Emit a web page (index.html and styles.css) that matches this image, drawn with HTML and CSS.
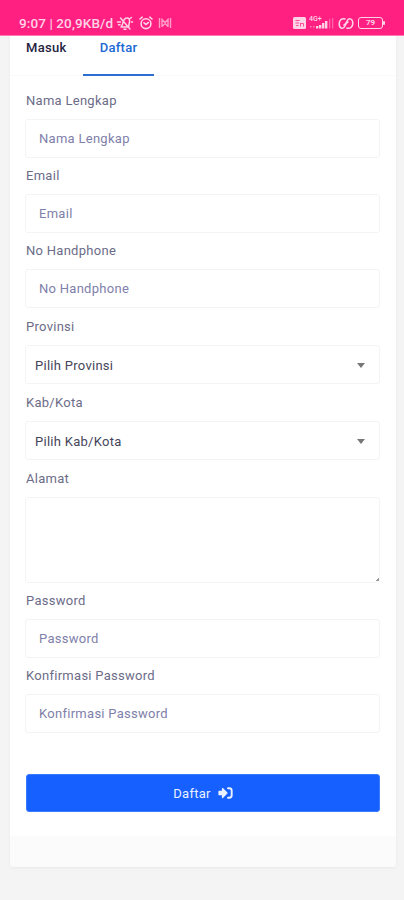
FILE: index.html
```
<!DOCTYPE html>
<html lang="id">
<head>
<meta charset="utf-8">
<meta name="viewport" content="width=device-width, initial-scale=1">
<title>Daftar</title>
<link rel="stylesheet" href="styles.css">
</head>
<body>
<header class="status">
  <span class="clock">9:07 | 20,9KB/d</span>
  <svg class="mute" width="18" height="16" viewBox="0 0 18 16" fill="none" stroke="currentColor" stroke-width="1.5" stroke-linecap="round" stroke-linejoin="round"><path d="M5 12c1.200-1 1.500-2.500 2-4.500C7.800 4.500 9 3 11 3s3 1.500 2.500 4l-1 5H5M8 14.300h2M4.500 3l9.500 11M1.500 7h3M2.500 9.800h1.500M14 3.500l1.500-1M15.500 7h1"/></svg>
  <svg class="alarm" width="14" height="14" viewBox="0 0 14 14" fill="none" stroke="currentColor" stroke-width="1.600" stroke-linecap="round"><circle cx="7" cy="7.7" r="4.900"/><path d="M1 3l2.200-1.800M13 3l-2.200-1.800M5 6.800l2 1.600 2.300-1.800"/></svg>
  <svg class="cast" width="14" height="12" viewBox="0 0 14 12" fill="none" stroke="currentColor" stroke-width="1.400"><path d="M1.500 1v10M12.500 1v10M4 10V2.500l3 3 3-3V10M4 9.500l3-3 3 3"/></svg>
  <span class="spacer"></span>
  <svg class="volte" width="13" height="12" viewBox="0 0 13 12"><rect width="13" height="12" rx="1.500" fill="currentColor"/><path d="M2.500 3.500h4M2.500 6h3.500M7 6.500h3.500v3M7.500 6.500v3M3 8.500h2.500" fill="none" stroke="#ff4c9a"/></svg>
  <span class="signal"><span class="net">4G+</span>
    <svg width="25" height="12" viewBox="0 0 25 12" fill="currentColor"><path d="M7 9h2.400v2.500H7zM10 8h2.400v3.500H10zM13 6h2.400v5.500H13zM16 4h2.400v7.500H16z"/><path d="M20 2h1.300v9.500H20zM23 1h1.300v10.500H23z" opacity=".4"/><path d="M1 9h1.500v1.500H1zM4 9h1.500v1.500H4z" opacity=".55"/></svg>
  </span>
  <svg class="link" width="16" height="13" viewBox="0 0 16 13" fill="none" stroke="currentColor" stroke-width="1.600" stroke-linecap="round"><path d="M7 1.900C3.500 1 1.200 3.500 1.200 6.700c0 2.600 1.400 4.500 3.300 4.500C7.600 11.200 6.500 6 10 5"/><path d="M9 11.100c3.500.9 5.800-1.600 5.800-4.800 0-2.600-1.400-4.500-3.300-4.500C8.400 1.800 9.500 7 6 8"/></svg>
  <span class="battery">79</span>
</header>
<main class="card">
  <nav class="tabs"><a class="tab">Masuk</a><a class="tab active">Daftar</a></nav>
  <form class="form">
    <label class="label" for="nama">Nama Lengkap</label>
    <input class="control" id="nama" placeholder="Nama Lengkap">
    <label class="label" for="email">Email</label>
    <input class="control" id="email" placeholder="Email">
    <label class="label" for="hp">No Handphone</label>
    <input class="control tall-gap" id="hp" placeholder="No Handphone">
    <label class="label" for="prov">Provinsi</label>
    <div class="control select tall-gap" id="prov"><span>Pilih Provinsi</span><i class="caret"></i></div>
    <label class="label" for="kota">Kab/Kota</label>
    <div class="control select tall-gap" id="kota"><span>Pilih Kab/Kota</span><i class="caret"></i></div>
    <label class="label" for="alamat">Alamat</label>
    <div class="area-wrap"><textarea class="control area" id="alamat"></textarea><i class="grip"></i></div>
    <label class="label" for="pass">Password</label>
    <input class="control" id="pass" placeholder="Password">
    <label class="label" for="konf">Konfirmasi Password</label>
    <input class="control" id="konf" placeholder="Konfirmasi Password">
    <button class="submit" type="button"><span>Daftar</span>
      <svg width="15" height="12" viewBox="0 0 15 12"><path d="M1 4.300h3.500V1.500L9 6l-4.500 4.500V7.700H1z" fill="currentColor" stroke="currentColor" stroke-width="1.200" stroke-linejoin="round"/><path d="M10 1.300h1.300c1.500 0 2.400.9 2.400 2.400v4.600c0 1.500-.9 2.400-2.400 2.400H10" fill="none" stroke="currentColor" stroke-width="1.900" stroke-linecap="round"/></svg>
    </button>
  </form>
  <footer class="foot"></footer>
</main>
</body>
</html>
```
FILE: styles.css
```
* { box-sizing: border-box; }
body {
  margin: 0;
  height: 900px;
  overflow: hidden;
  background: #f4f4f4;
  font-family: Roboto, sans-serif;
  font-size: 13px;
  letter-spacing: .28px;
  color: #6c6c88;
}
.status {
  display: flex;
  align-items: center;
  height: 36px;
  padding: 11px 20px 0 19px;
  background: #ff2082;
  border-bottom: 1px solid #ff79b3;
  color: #ffd3e6;
  letter-spacing: 0;
}
.clock { width: 96px; font-size: 13.5px; letter-spacing: .1px; font-weight: 500; white-space: nowrap; }
.mute { margin-left: 1px; }
.alarm { margin-left: 5px; }
.cast { margin-left: 5px; opacity: .7; }
.spacer { flex: 1; }
.signal { position: relative; display: flex; margin-left: 3px; }
.net { position: absolute; left: 0; top: -2px; font-size: 7px; line-height: 8px; font-weight: 500; }
.link { margin-left: 4px; }
.battery {
  position: relative;
  width: 25px;
  height: 12px;
  margin: 0 1px 0 4px;
  border: 1.5px solid currentColor;
  border-radius: 3px;
  font-size: 8px;
  line-height: 10px;
  font-weight: 700;
  text-align: center;
}
.battery::after {
  content: "";
  position: absolute;
  right: -3px;
  top: 3px;
  width: 2px;
  height: 4px;
  background: currentColor;
  border-radius: 1px;
}
.card {
  width: 386px;
  height: 831px;
  margin-left: 10px;
  display: flex;
  flex-direction: column;
  background: #fff;
  border-radius: 0 0 4px 4px;
  box-shadow: 0 1px 3px rgba(0, 0, 0, .05);
}
.tabs {
  display: flex;
  height: 40px;
  flex: none;
  border-bottom: 1px solid #f9f9fa;
}
.tab {
  width: 73px;
  height: 40px;
  padding: 3px 0 0 16px;
  line-height: 18px;
  font-weight: 500;
  color: #25233f;
}
.tab.active {
  width: 71px;
  text-align: center;
  padding: 3px 0 0;
  color: #2068d4;
  border-bottom: 2px solid #2c6fd1;
}
.form {
  display: flex;
  flex-direction: column;
  padding: 15px 16px 0 15px;
  flex: 1;
}
.label { height: 20px; line-height: 20px; margin: 0 0 8px 1px; }
.control {
  display: block;
  height: 39px;
  flex: none;
  width: 355px;
  margin: 0 0 8px;
  padding: 0 13px;
  border: 1px solid #f4f4f6;
  border-radius: 3px;
  background: #fff;
  font: inherit;
  letter-spacing: inherit;
  color: #45455a;
}
.control::placeholder { color: #8080aa; opacity: 1; }
.control.tall-gap { margin-bottom: 9px; }
.control.select {
  display: flex;
  align-items: center;
  justify-content: space-between;
  padding: 1px 14px 0 9px;
}
.caret {
  border: 4px solid transparent;
  border-top: 5px solid #777;
  border-bottom: 0;
}
.area-wrap { position: relative; }
.control.area { height: 86px; resize: none; }
.grip {
  position: absolute;
  right: 1px;
  top: 81px;
  width: 3px;
  height: 3px;
  background: linear-gradient(135deg, transparent 40%, #999 40%);
}
.submit {
  display: flex;
  align-items: center;
  justify-content: center;
  gap: 7px;
  width: 354px;
  height: 38px;
  margin: 33px 0 0 1px;
  padding: 0;
  border: 1px solid #3b7bff;
  border-radius: 3px;
  background: #1660ff;
  color: #eaf1ff;
  font: inherit;
  letter-spacing: inherit;
}
.foot { height: 31px; flex: none; background: #fbfbfb; border-radius: 0 0 4px 4px; }
```
